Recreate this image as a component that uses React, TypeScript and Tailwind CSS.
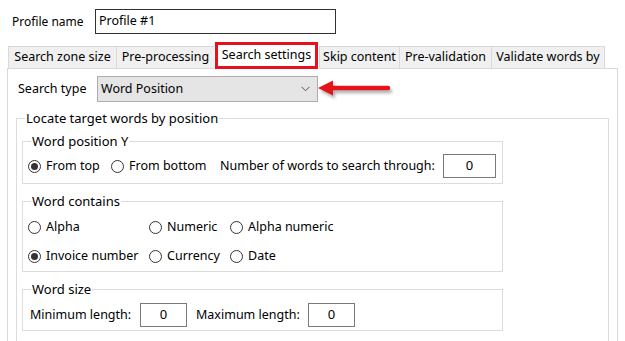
import type { ReactNode } from 'react'

const TABS = ['Search zone size', 'Pre-processing', 'Search settings', 'Skip content', 'Pre-validation', 'Validate words by']
const TAB_W = [108, 98, 105, 80, 92, 114]

function Radio({ label, checked }: { label: string; checked?: boolean }) {
  return (
    <div className="flex items-center gap-[5px]">
      <span className="flex h-[13px] w-[13px] items-center justify-center rounded-full border border-[#333333] bg-white">
        {checked && <span className="h-[7px] w-[7px] rounded-full bg-[#333333]" />}
      </span>
      <span>{label}</span>
    </div>
  )
}

function Group({ title, className, children }: { title: string; className?: string; children: ReactNode }) {
  return (
    <fieldset className={`border border-[#dcdcdc] pl-[5px] ${className ?? ''}`}>
      <legend className="ml-[3px] px-[1px] text-[13px] leading-[16px]">{title}</legend>
      {children}
    </fieldset>
  )
}

function NumBox({ w }: { w: string }) {
  return (
    <div className={`flex h-[24px] ${w} items-center justify-center border border-[#7a7a7a] bg-white text-[13px]`}>0</div>
  )
}

export default function App() {
  return (
    <div className="relative h-[341px] w-[625px] overflow-hidden bg-white text-[12.5px] text-black [font-family:'Noto_Sans',sans-serif]">
      <div className="flex items-center pl-[12px] pt-[9px]">
        <span className="w-[83px] text-[12px]">Profile name</span>
        <div className="flex h-[25px] w-[241px] items-center border border-[#333333] pl-[3px]">Profile #1</div>
      </div>

      <div className="mt-[12px] flex pl-[8px]">
        {TABS.map((t, i) => (
          <div
            key={t}
            style={{ width: TAB_W[i] }}
            className={
              i === 2
                ? '-mt-[2px] flex h-[25px] items-center justify-center bg-white pb-[3px]'
                : 'flex h-[22px] items-center justify-center border-l border-t border-[#d9d9d9] bg-[#f0f0f0] last:border-r'
            }
          >
            {t}
          </div>
        ))}
      </div>

      <div className="-mt-[1px] ml-[7px] h-[300px] w-[611px] border border-[#d9d9d9] bg-white pl-[10px] pt-[7px]">
        <div className="flex items-center">
          <span className="w-[79px]">Search type</span>
          <div className="flex h-[26px] w-[221px] items-center justify-between border border-[#adadad] bg-[#e5e5e5] pl-[3px] pr-[7px]">
            <span>Word Position</span>
            <svg width="9" height="6" viewBox="0 0 9 6">
              <path d="M0.5 0.8 L4.5 4.8 L8.5 0.8" fill="none" stroke="#555" strokeWidth="1" />
            </svg>
          </div>
        </div>

        <Group title="Locate target words by position" className="ml-[-2px] mt-[8px] h-[260px] w-[593px] pr-[6px]">
          <div className="mt-[7px] flex flex-col gap-[9px]">
            <Group title="Word position Y" className="h-[51px] w-[481px]">
              <div className="flex h-[34px] items-center">
                <span className="w-[83px]"><Radio label="From top" checked /></span>
                <span className="w-[109px]"><Radio label="From bottom" /></span>
                <span>Number of words to search through:</span>
                <div className="ml-[8px]">
                  <NumBox w="w-[53px]" />
                </div>
              </div>
            </Group>

            <Group title="Word contains" className="h-[79px] w-[481px]">
              <div className="grid grid-cols-[121px_81px_1fr] pt-[4px]">
                <div className="flex h-[29px] items-center"><Radio label="Alpha" /></div>
                <div className="flex h-[29px] items-center"><Radio label="Numeric" /></div>
                <div className="flex h-[29px] items-center"><Radio label="Alpha numeric" /></div>
                <div className="flex h-[29px] items-center"><Radio label="Invoice number" checked /></div>
                <div className="flex h-[29px] items-center"><Radio label="Currency" /></div>
                <div className="flex h-[29px] items-center"><Radio label="Date" /></div>
              </div>
            </Group>

            <Group title="Word size" className="h-[50px] w-[481px]">
              <div className="flex h-[36px] items-center pl-[2px]">
                <span className="w-[110px]">Minimum length:</span>
                <NumBox w="w-[47px]" />
                <span className="ml-[9px] w-[112px]">Maximum length:</span>
                <NumBox w="w-[47px]" />
              </div>
            </Group>
          </div>
        </Group>
      </div>

      {/* red highlight box around the selected tab */}
      <div className="absolute left-[215px] top-[42px] z-20 h-[27px] w-[103px] border-[3px] border-[#e8101a]" />

      {/* red arrow pointing at the combo */}
      <svg className="absolute left-[312px] top-[75px]" width="90" height="30" viewBox="0 0 90 30">
        <defs>
          <filter id="sh" x="-20%" y="-50%" width="140%" height="200%">
            <feGaussianBlur stdDeviation="1.5" />
          </filter>
        </defs>
        <g transform="translate(2 3)" opacity="0.45" filter="url(#sh)">
          <path d="M6 13 L21 5.5 L21 20.5 Z" fill="#555" />
          <line x1="20" y1="13" x2="76" y2="13" stroke="#555" strokeWidth="4.5" strokeLinecap="round" />
        </g>
        <path d="M6 13 L21 5.5 L21 20.5 Z" fill="#e5141b" />
        <line x1="20" y1="13" x2="76" y2="13" stroke="#e5141b" strokeWidth="4.5" strokeLinecap="round" />
      </svg>
    </div>
  )
}
